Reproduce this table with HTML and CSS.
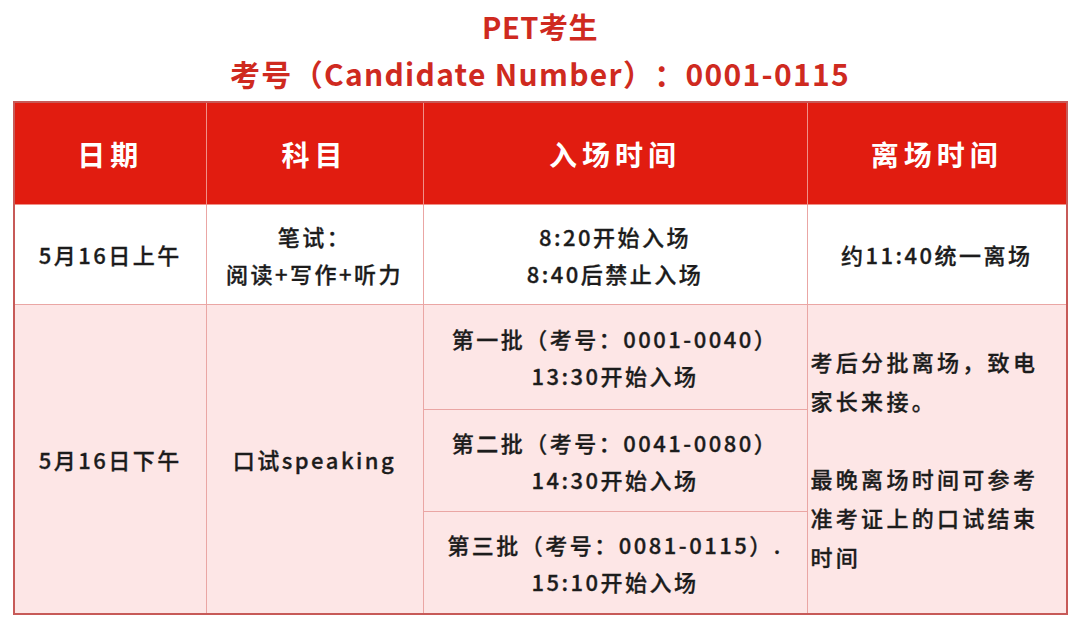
FILE: index.html
```html
<!DOCTYPE html>
<html lang="zh-CN">
<head>
<meta charset="utf-8">
<link rel="stylesheet" href="styles.css">
</head>
<body>
<div class="page">
  <div class="titles">
    <div class="title">PET考生</div>
    <div class="title title-num">考号（Candidate Number）：0001-0115</div>
  </div>
  <table class="sched">
    <colgroup>
      <col class="c1"><col class="c2"><col class="c3"><col class="c4">
    </colgroup>
    <thead>
      <tr class="head">
        <th>日期</th><th>科目</th><th>入场时间</th><th>离场时间</th>
      </tr>
    </thead>
    <tbody>
      <tr class="am">
        <td>5月16日上午</td>
        <td>笔试：<br>阅读+写作+听力</td>
        <td>8:20开始入场<br>8:40后禁止入场</td>
        <td>约11:40统一离场</td>
      </tr>
      <tr class="pm pm1">
        <td rowspan="3">5月16日下午</td>
        <td rowspan="3">口试speaking</td>
        <td class="batch">第一批（考号：0001-0040）<br>13:30开始入场</td>
        <td rowspan="3" class="leave">考后分批离场，致电<br>家长来接。<br><br>最晚离场时间可参考<br>准考证上的口试结束<br>时间</td>
      </tr>
      <tr class="pm pm2">
        <td class="batch">第二批（考号：0041-0080）<br>14:30开始入场</td>
      </tr>
      <tr class="pm pm3">
        <td class="batch">第三批（考号：0081-0115）.<br>15:10开始入场</td>
      </tr>
    </tbody>
  </table>
</div>
</body>
</html>
```
FILE: styles.css
```css
html, body {
  margin: 0;
  padding: 0;
  background: #ffffff;
}
body {
  font-family: "Noto Sans CJK SC", "Noto Sans", sans-serif;
  color: #1c1c1c;
  text-spacing-trim: space-all;
}
.page {
  width: 1080px;
  height: 625px;
  overflow: hidden;
}
.titles {
  padding-top: 3px;
  text-align: center;
  color: #cf2a1f;
  font-weight: 700;
  font-size: 29px;
}
.title {
  height: 48px;
  line-height: 46px;
  letter-spacing: 0.5px;
}
.title-num {
  font-size: 30px;
  letter-spacing: 1.3px;
  line-height: 44px;
}
.sched {
  margin: 2px 0 0 13px;
  width: 1053px;
  table-layout: fixed;
  border-collapse: collapse;
  border: 2px solid #c75a58;
}
.c1 { width: 192px; }
.c2 { width: 217px; }
.c3 { width: 384px; }
.c4 { width: 260px; }
.sched th,
.sched td {
  border: 1px solid #eaa6a4;
  text-align: center;
  vertical-align: middle;
  padding: 0;
}
.head th {
  background: #e11c10;
  color: #ffffff;
  font-size: 28px;
  font-weight: 700;
  letter-spacing: 5px;
  height: 101px;
  border-color: #f09088;
  border-top-color: #c75a58;
}
.sched td {
  font-size: 22px;
  font-weight: 500;
  letter-spacing: 2.5px;
  line-height: 37px;
  -webkit-text-stroke: 0.3px #1c1c1c;
}
.am td {
  background: #ffffff;
  height: 99px;
}
.pm td {
  background: #fde6e6;
}
.pm1 .batch { height: 104px; }
.pm2 .batch { height: 101px; }
.pm3 .batch { height: 101px; }
.leave {
  text-align: left !important;
  padding-left: 3px !important;
  line-height: 39px !important;
  letter-spacing: 3.3px !important;
}
```
